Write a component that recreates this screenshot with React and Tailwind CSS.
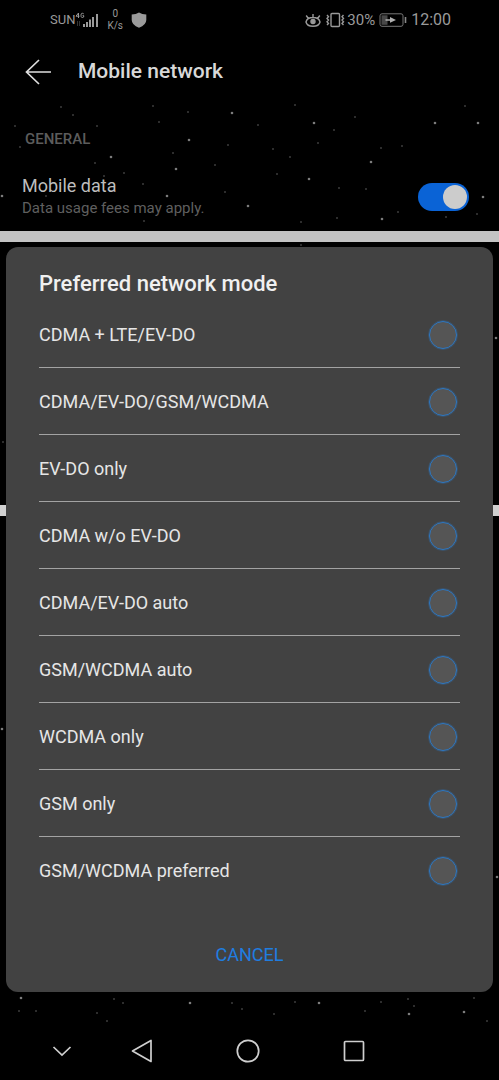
import { useState } from "react";

const MODES = [
  "CDMA + LTE/EV-DO",
  "CDMA/EV-DO/GSM/WCDMA",
  "EV-DO only",
  "CDMA w/o EV-DO",
  "CDMA/EV-DO auto",
  "GSM/WCDMA auto",
  "WCDMA only",
  "GSM only",
  "GSM/WCDMA preferred",
];

const BRIGHT_STARS = [
  [232, 113], [189, 140], [111, 157], [176, 169], [167, 196], [2, 196], [248, 206],
  [314, 123], [435, 123], [478, 123], [371, 162], [382, 219], [483, 197], [309, 179],
  [190, 1003], [319, 1003], [409, 1014], [464, 1012], [21, 998], [497, 877], [496, 338], [2, 729],
];

const FAINT_STARS = [
  [73, 115], [159, 122], [188, 112], [124, 173], [144, 221], [215, 165], [225, 192], [46, 196],
  [173, 153], [97, 126], [15, 126], [143, 184], [355, 117], [258, 125], [339, 188], [477, 214],
  [402, 146], [381, 148], [334, 130], [318, 143], [290, 157], [277, 174], [301, 222], [337, 218],
  [398, 212], [366, 189], [273, 149], [446, 217], [301, 245], [19, 1011], [36, 1011], [107, 1021],
  [97, 1013], [123, 1003], [114, 999], [242, 1009], [232, 1003], [295, 1002], [274, 1014],
  [381, 1002], [365, 1011], [414, 1006], [474, 998], [487, 1021], [408, 999], [3, 442], [153, 106],
  [61, 107], [295, 105], [465, 106], [20, 147], [228, 145], [95, 163], [104, 176],
];

function Starfield() {
  return (
    <svg className="pointer-events-none absolute inset-0 h-full w-full" aria-hidden="true">
      {BRIGHT_STARS.map(([x, y]) => (
        <circle key={`${x}-${y}`} cx={x} cy={y} r="1.3" fill="#7c7c7c" />
      ))}
      {FAINT_STARS.map(([x, y]) => (
        <circle key={`${x}-${y}`} cx={x} cy={y} r="1" fill="#3c3c3c" />
      ))}
    </svg>
  );
}

function StatusBar() {
  return (
    <div className="flex h-10 items-center justify-between pr-12 pl-[50px] text-[#9a9a9a]">
      <div className="flex items-center">
        <span className="text-[13px]">SUN</span>
        <svg className="h-4 w-6" viewBox="0 0 24 16" fill="none" stroke="currentColor" aria-hidden="true">
          <path d="M3.500 6V1L1 4.200h3.500M8.700 1.800Q6 .2 6 3.400T8.700 5V3.600H7.600" strokeWidth="1" />
          <path d="M2.500 9v5M4.500 9v5" stroke="#333" strokeWidth="1" />
          <path d="M9 15v-3M12 15v-5M15 15V7.500M18 15V5M22 15V2" strokeWidth="2" />
        </svg>
        <span className="ml-2 flex flex-col items-center text-[10px] leading-3">
          <span>0</span>
          <span>K/s</span>
        </span>
        <svg className="ml-2 h-4 w-4" viewBox="0 0 16 16" fill="currentColor" aria-hidden="true">
          <path d="M8 .5Q11 2.400 15.300 2.400V8q0 5-7.300 7.700Q.7 13 .7 8V2.400Q5 2.400 8 .5Z" />
        </svg>
      </div>
      <div className="flex items-center">
        <svg className="h-4 w-4" viewBox="0 0 16 16" fill="none" stroke="currentColor" strokeWidth="1.4" aria-hidden="true">
          <path d="M1 10q1-4.500 7-4.500T15 10q-1 4.300-7 4.300T1 10ZM8 5.500V2M3.400 6.500 1.200 3.500M12.600 6.500l2.200-3" />
          <circle cx="8" cy="9.500" r="2" fill="currentColor" />
        </svg>
        <svg className="ml-1 h-4 w-5" viewBox="0 0 20 16" fill="none" stroke="currentColor" strokeWidth="1.400" aria-hidden="true">
          <rect x="6" y="1.500" width="8.500" height="13" rx="1" />
          <path d="M2 3l1.500 1.700L2 6.400l1.500 1.700L2 9.800l1.500 1.700L2 13M18.500 3 17 4.700l1.500 1.700L17 8.100l1.500 1.700-1.500 1.700 1.500 1.500" />
        </svg>
        <span className="ml-0.5 text-[15px]">30%</span>
        <svg className="ml-1 h-4 w-7" viewBox="0 0 28 16" fill="none" aria-hidden="true">
          <rect x="1" y="1.800" width="23" height="12.500" rx="2" stroke="#777" />
          <rect x="2.500" y="3.300" width="6" height="9.500" fill="#484848" />
          <path d="M6.500 7.300H11V5l6 2.900-6 2.900V8.700H6.500Z" fill="#b0b0b0" />
          <path d="M26.500 5v6" stroke="#888" strokeWidth="1.600" />
        </svg>
        <time className="ml-1 text-base">12:00</time>
      </div>
    </div>
  );
}

function NavigationBar() {
  const button = "flex h-12 w-12 items-center justify-center";
  return (
    <nav className="flex h-[58px] items-center justify-center gap-8 pr-[83px] text-[#cfcfcf]" aria-label="System">
      <button type="button" className={button} aria-label="Hide navigation bar">
        <svg className="h-6 w-6" viewBox="0 0 24 24" fill="none" stroke="currentColor" strokeWidth="1.700" aria-hidden="true">
          <path d="m3.500 8 8.500 8 8.500-8" />
        </svg>
      </button>
      <div className="flex items-center gap-[58px]">
        <button type="button" className={button} aria-label="Back">
          <svg className="h-6 w-6" viewBox="0 0 24 24" fill="none" stroke="currentColor" strokeWidth="1.700" strokeLinejoin="round" aria-hidden="true">
            <path d="M21 1.500v21L2.500 12Z" />
          </svg>
        </button>
        <button type="button" className={button} aria-label="Home">
          <svg className="h-6 w-6" viewBox="0 0 24 24" fill="none" stroke="currentColor" strokeWidth="1.700" aria-hidden="true">
            <circle cx="12" cy="12" r="10.700" />
          </svg>
        </button>
        <button type="button" className={button} aria-label="Recent apps">
          <svg className="h-6 w-6" viewBox="0 0 24 24" fill="none" stroke="currentColor" strokeWidth="1.700" aria-hidden="true">
            <rect x="2.500" y="2.500" width="19" height="19" rx="1" />
          </svg>
        </button>
      </div>
    </nav>
  );
}

function NetworkModeDialog() {
  const [mode, setMode] = useState("");
  return (
    <section
      role="dialog"
      aria-labelledby="dialog-title"
      className="relative col-start-1 row-start-1 mx-1.5 mt-[5px] flex flex-col rounded-xl bg-[#424242] px-[33px] pt-[22px] pb-[15px]"
    >
      <h2 id="dialog-title" className="pb-0.5 text-[22px] leading-[30px] font-medium text-[#f0f0f0]">
        Preferred network mode
      </h2>
      <div role="radiogroup" aria-labelledby="dialog-title" className="divide-y divide-[#a3a3a3]">
        {MODES.map((name) => (
          <label key={name} className="flex h-[67px] items-center justify-between pt-px pr-[3px] text-lg text-[#e6e6e6]">
            {name}
            <input
              type="radio"
              name="network-mode"
              checked={mode === name}
              onChange={() => setMode(name)}
              className="h-7 w-7 appearance-none rounded-full border-[1px] border-[#2c78c4] bg-[#555555] outline outline-[#2c78c4]/30 checked:bg-[#0a6be0]"
            />
          </label>
        ))}
      </div>
      <button type="button" className="mt-[29px] h-11 self-center px-4 text-lg text-[#1f7de0]">
        CANCEL
      </button>
    </section>
  );
}

export default function App() {
  const [dataOn, setDataOn] = useState(true);
  return (
    <div className="relative flex min-h-screen flex-col bg-black font-['Roboto',sans-serif]">
      <Starfield />
      <StatusBar />
      <header className="flex h-16 items-center gap-6 pl-6">
        <button type="button" className="h-7 w-[30px]" aria-label="Back">
          <svg className="h-7 w-7" viewBox="0 0 28 28" fill="none" stroke="#dedede" strokeWidth="1.700" aria-hidden="true">
            <path d="M27 14H2.500M15 2 2.500 14 15 26" />
          </svg>
        </button>
        <h1 className="text-[21px] font-medium text-[#d8d8d8]">Mobile network</h1>
      </header>
      <main className="relative flex flex-1 flex-col">
        <h2 className="px-[25px] pt-6 text-[15px] leading-[22px] font-medium text-[#5c5c5c]">GENERAL</h2>
        <div className="flex items-center justify-between pt-6 pr-[30px] pb-3 pl-[22px]">
          <label htmlFor="mobile-data" className="flex flex-col">
            <span className="text-lg leading-6 text-[#bdbdbd]">Mobile data</span>
            <span className="text-[15px] leading-[21px] text-[#5f5f5f]">Data usage fees may apply.</span>
          </label>
          <input
            id="mobile-data"
            type="checkbox"
            role="switch"
            checked={dataOn}
            onChange={() => setDataOn(!dataOn)}
            className="flex h-7 w-[51px] appearance-none items-center rounded-full bg-[#444] px-0.5 before:h-6 before:w-6 before:rounded-full before:bg-[#cccccc] checked:justify-end checked:bg-[#0a63d6]"
          />
        </div>
        <div className="h-[11px] bg-[#c3c3c3]" />
        <div className="grid flex-1 items-start pb-[30px]">
          <div className="col-start-1 row-start-1 mt-[263px] h-[11px] bg-[#d0d0d0]" />
          <NetworkModeDialog />
        </div>
      </main>
      <NavigationBar />
    </div>
  );
}
